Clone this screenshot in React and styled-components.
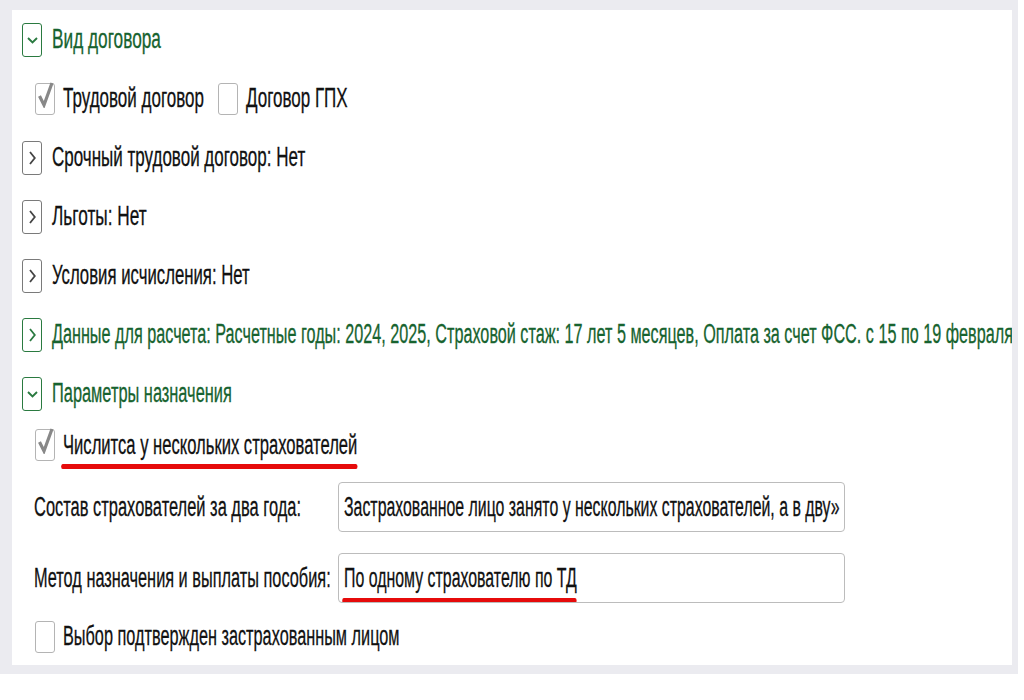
import React from "react";
import styled, { createGlobalStyle } from "styled-components";

const Global = createGlobalStyle`
  html, body {
    margin: 0;
    padding: 0;
    background: #ffffff;
  }
  body {
    font-family: "Liberation Sans", Arial, sans-serif;
  }
`;

const Frame = styled.div`
  width: 1018px;
  height: 674px;
  box-sizing: border-box;
  padding: 10px 6px 9px 12px;
  background: #ebebf0;
`;

const Panel = styled.div`
  height: 100%;
  background: #ffffff;
  display: flex;
  flex-direction: column;
  overflow: hidden;
`;

const Row = styled.div`
  flex: none;
  height: ${(p) => p.$h ?? 59}px;
  margin-top: ${(p) => p.$mt ?? 0}px;
  padding-left: ${(p) => p.$pl ?? 10}px;
  display: flex;
  align-items: center;
  gap: ${(p) => p.$gap ?? 10}px;
  white-space: nowrap;
`;

/* the source UI uses a narrow face; squeeze the regular one to its width */
const Text = styled.span`
  position: relative;
  display: inline-block;
  font-size: 27px;
  line-height: 1;
  color: ${(p) => (p.$green ? "#17632f" : "#111111")};
  -webkit-text-stroke: 0.3px currentColor;
  transform: scaleX(${(p) => ((p.$sx ?? 0.66) * 25) / 27});
  transform-origin: 0 50%;

  ${(p) =>
    p.$marked &&
    `
    &::after {
      content: "";
      position: absolute;
      left: -3px;
      right: 0;
      bottom: ${p.$mb ?? -10}px;
      height: 5px;
      border-radius: 3px;
      background: #e60b0b;
    }
  `}
`;

const Toggle = styled.span`
  width: 20px;
  height: 34px;
  box-sizing: border-box;
  border: 1.5px solid ${(p) => (p.$green ? "#2a7a40" : "#7a7a7a")};
  border-radius: 3px;
  display: flex;
  align-items: center;
  justify-content: center;
  flex: none;
`;

const Check = styled.span`
  position: relative;
  width: 20px;
  height: 32px;
  box-sizing: border-box;
  border: 1.5px solid #b4b4b4;
  border-radius: 3px;
  flex: none;

  svg {
    position: absolute;
    left: 1px;
    top: -4px;
  }
`;

const CheckItem = styled.span`
  display: inline-flex;
  align-items: center;
  gap: 8px;
  margin-right: ${(p) => p.$mr ?? 0}px;
`;

const Label = styled.span`
  width: ${(p) => p.$w}px;
  flex: none;
`;

const FieldLabel = styled.div`
  width: 295px;
  flex: none;
`;

const Field = styled.div`
  width: 507px;
  height: 50px;
  box-sizing: border-box;
  border: 1px solid #bcbcbc;
  border-radius: 4px;
  padding: 0 5px;
  display: flex;
  align-items: center;
  overflow: hidden;
`;

const Chevron = ({ dir, color }) => (
  <svg width="13" height="16" viewBox="0 0 13 16">
    {dir === "down" ? (
      <path d="M2 6 L6.5 10.5 L11 6" fill="none" stroke={color} strokeWidth="1.9" />
    ) : (
      <path d="M4 2 L8.8 8 L4 14" fill="none" stroke={color} strokeWidth="1.8" />
    )}
  </svg>
);

const Tick = () => (
  <svg width="17" height="28" viewBox="0 0 17 28">
    <path d="M2.5 16 L7 25 L15 3" fill="none" stroke="#888888" strokeWidth="3.2" />
  </svg>
);

const Group = ({ green, dir, sx, children }) => (
  <Row>
    <Toggle $green={green}>
      <Chevron dir={dir} color={green ? "#2a7a40" : "#444444"} />
    </Toggle>
    <Text $green={green} $sx={sx}>
      {children}
    </Text>
  </Row>
);

const Box = ({ checked, children, mr }) => (
  <CheckItem $mr={mr}>
    <Check>{checked && <Tick />}</Check>
    {children}
  </CheckItem>
);

export default function App() {
  return (
    <>
      <Global />
      <Frame>
        <Panel>
          <Group green dir="down" sx={0.69}>
            Вид договора
          </Group>
          <Row $pl={23} $gap={0}>
            <Box checked mr={14}>
              <Label $w={141}>
                <Text $sx={0.68}>Трудовой договор</Text>
              </Label>
            </Box>
            <Box>
              <Text $sx={0.68}>Договор ГПХ</Text>
            </Box>
          </Row>
          <Group dir="right" sx={0.68}>
            Срочный трудовой договор: Нет
          </Group>
          <Group dir="right" sx={0.69}>
            Льготы: Нет
          </Group>
          <Group dir="right" sx={0.67}>
            Условия исчисления: Нет
          </Group>
          <Group green dir="right" sx={0.648}>
            Данные для расчета: Расчетные годы: 2024, 2025, Страховой стаж: 17 лет 5 месяцев, Оплата за счет ФСС. с 15 по 19 февраля
          </Group>
          <Group green dir="down" sx={0.655}>
            Параметры назначения
          </Group>
          <Row $pl={23} $h={44}>
            <Box checked>
              <Text $marked $sx={0.664}>
                Числитса у нескольких страхователей
              </Text>
            </Box>
          </Row>
          <Row $pl={22} $h={60} $mt={10} $gap={9}>
            <FieldLabel>
              <Text $sx={0.658}>Состав страхователей за два года:</Text>
            </FieldLabel>
            <Field>
              <Text $sx={0.635}>Застрахованное лицо занято у нескольких страхователей, а в дву»</Text>
            </Field>
          </Row>
          <Row $pl={22} $h={60} $mt={11} $gap={9}>
            <FieldLabel>
              <Text $sx={0.653}>Метод назначения и выплаты пособия:</Text>
            </FieldLabel>
            <Field>
              <Text $marked $mb={-11} $sx={0.636}>
                По одному страхователю по ТД
              </Text>
            </Field>
          </Row>
          <Row $pl={23} $h={57}>
            <Box>
              <Text $sx={0.651}>Выбор подтвержден застрахованным лицом</Text>
            </Box>
          </Row>
        </Panel>
      </Frame>
    </>
  );
}
